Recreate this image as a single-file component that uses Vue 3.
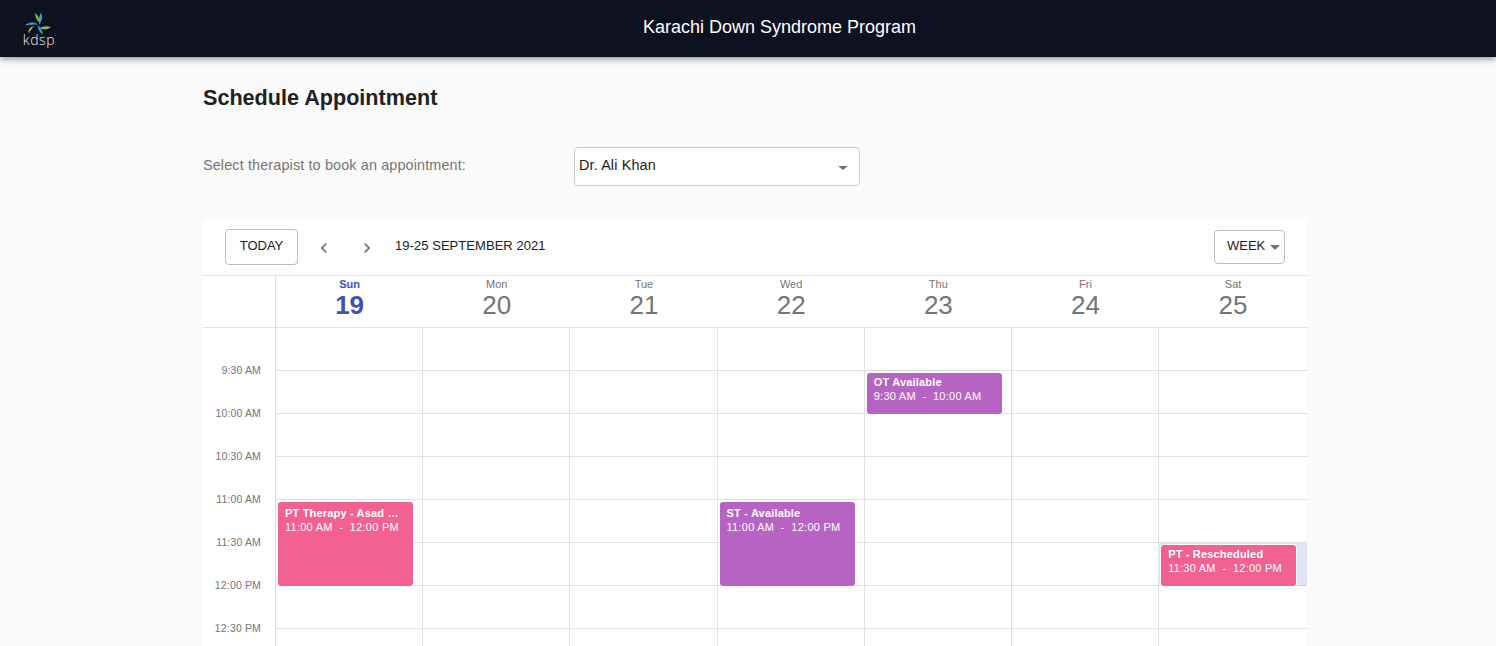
<script setup>
const times = ['9:30 AM', '10:00 AM', '10:30 AM', '11:00 AM', '11:30 AM', '12:00 PM', '12:30 PM']

const days = [
  { name: 'Sun', date: 19, today: true, events: [] },
  { name: 'Mon', date: 20, events: [] },
  { name: 'Tue', date: 21, events: [] },
  { name: 'Wed', date: 22, events: [] },
  { name: 'Thu', date: 23, events: [] },
  { name: 'Fri', date: 24, events: [] },
  { name: 'Sat', date: 25, events: [] },
]

// slot index counted from the first line of the grid (9:00 AM), each slot 43px
const slot = 43
days[0].events.push({ title: 'PT Therapy - Asad …', time: '11:00 AM  -  12:00 PM', from: 4, span: 2, color: '#f26192' })
days[3].events.push({ title: 'ST - Available', time: '11:00 AM  -  12:00 PM', from: 4, span: 2, color: '#b763c4' })
days[4].events.push({ title: 'OT Available', time: '9:30 AM  -  10:00 AM', from: 1, span: 1, color: '#b763c4' })
days[6].events.push({ title: 'PT - Rescheduled', time: '11:30 AM  -  12:00 PM', from: 5, span: 1, color: '#f26192', shaded: true })

const eventStyle = (ev) => ({
  top: ev.from * slot + 2 + 'px',
  height: ev.span * slot - 2 + 'px',
  background: ev.color,
})
</script>

<template>
  <div class="page">
    <header class="topbar">
      <div class="logo">
        <svg width="32" height="26" viewBox="22 10 32 26">
          <path d="M40 12.5C42 17 41 21 38 24.5C37.2 20 38 16.5 40 12.5Z" fill="#2aa5d6" />
          <path d="M34 13C37 15 38 18 38.3 22C35.6 20.4 34.4 17 34 13Z" fill="#86c440" />
          <path d="M24 25.2C28 21.6 33 21.6 37.5 24.5C33 24.6 28 24.8 24 25.2Z" fill="#2aa5d6" />
          <path d="M28 33.5C26.4 30 29 26.8 33.8 26C31 28 29.2 30.5 28 33.5Z" fill="#86c440" />
          <path d="M50 27C46 25.4 42 26.2 38.5 28C42 29.8 46.5 30 50 27Z" fill="#86c440" />
          <path d="M42 34C38.6 32.8 36.6 29 37 25C39.4 27.6 41.2 30.5 42 34Z" fill="#2aa5d6" />
        </svg>
        <span class="logo-text">kdsp</span>
      </div>
      <div class="app-title">Karachi Down Syndrome Program</div>
    </header>

    <main class="content">
      <h1 class="heading">Schedule Appointment</h1>

      <div class="therapist-row">
        <label class="therapist-label">Select therapist to book an appointment:</label>
        <div class="select">
          <span>Dr. Ali Khan</span>
          <i class="caret small"></i>
        </div>
      </div>

      <section class="calendar">
        <div class="toolbar">
          <button class="today-btn">TODAY</button>
          <button class="nav-btn">
            <svg width="20" height="20" viewBox="0 0 24 24"><path d="M15.4 7.4 14 6l-6 6 6 6 1.4-1.4L10.8 12z" fill="#757575" /></svg>
          </button>
          <button class="nav-btn">
            <svg width="20" height="20" viewBox="0 0 24 24"><path d="M10 6 8.6 7.4l4.6 4.6-4.6 4.6L10 18l6-6z" fill="#757575" /></svg>
          </button>
          <span class="range">19-25 SEPTEMBER 2021</span>
          <div class="view-select">
            <span>WEEK</span>
            <i class="caret"></i>
          </div>
        </div>

        <div class="day-head">
          <div class="time-corner"></div>
          <div v-for="d in days" :key="d.name" class="day-cell" :class="{ today: d.today }">
            <div class="day-name">{{ d.name }}</div>
            <div class="day-num">{{ d.date }}</div>
          </div>
        </div>

        <div class="week">
          <div class="time-col">
            <div class="time-first"></div>
            <div v-for="t in times" :key="t" class="time-label"><span>{{ t }}</span></div>
          </div>
          <div v-for="d in days" :key="d.name" class="day-col">
            <div v-for="n in 8" :key="n" class="slot"></div>
            <template v-for="ev in d.events" :key="ev.title">
              <div v-if="ev.shaded" class="shade" :style="{ top: ev.from * slot + 'px', height: ev.span * slot + 'px' }"></div>
              <div class="event" :class="{ compact: ev.span === 1 }" :style="eventStyle(ev)">
                <div class="event-title">{{ ev.title }}</div>
                <div class="event-time">{{ ev.time }}</div>
              </div>
            </template>
          </div>
        </div>
      </section>
    </main>
  </div>
</template>

<style>
html, body {
  margin: 0;
  background: #fafafa;
}
</style>

<style scoped>
.page {
  height: 646px;
  overflow: hidden;
  background: #fafafa;
  font-family: "Liberation Sans", Arial, sans-serif;
  color: #212121;
}

.topbar {
  position: relative;
  height: 57px;
  background: #0e111f;
  box-shadow: 0 2px 4px -1px rgba(0,0,0,.2), 0 4px 5px 0 rgba(0,0,0,.14), 0 1px 10px 0 rgba(0,0,0,.12);
  display: flex;
  align-items: center;
  justify-content: center;
  padding-left: 63px;
}

.logo {
  position: absolute;
  left: 23px;
  top: 10px;
  width: 32px;
  display: flex;
  flex-direction: column;
  align-items: center;
}

.logo-text {
  margin-top: -3px;
  font-family: "Open Sans", sans-serif;
  font-size: 14px;
  font-weight: 300;
  line-height: 13px;
  letter-spacing: 0.6px;
  color: #f0f0f0;
}

.app-title {
  color: #fff;
  font-size: 18px;
  margin-bottom: 3px;
}

.content {
  width: 1104px;
  margin-left: 203px;
}

.heading {
  margin: 0;
  padding-top: 27px;
  font-size: 21.6px;
  line-height: 28px;
  font-weight: 700;
  color: #212121;
}

.therapist-row {
  display: flex;
  align-items: center;
  margin-top: 35px;
}

.therapist-label {
  width: 371px;
  font-size: 14.4px;
  letter-spacing: 0.00938em;
  color: #757575;
  margin-bottom: 4px;
}

.select {
  width: 286px;
  height: 39px;
  box-sizing: border-box;
  background: #fff;
  border: 1px solid #ccc;
  border-radius: 4px;
  display: flex;
  align-items: center;
  justify-content: space-between;
  padding: 0 11px 4px 4px;
  font-size: 14.4px;
  letter-spacing: 0.00938em;
  color: #212121;
}

.caret {
  display: block;
  width: 0;
  height: 0;
  margin-top: 5px;
  border-left: 5px solid transparent;
  border-right: 5px solid transparent;
  border-top: 5px solid #757575;
}

.caret.small {
  border-top-width: 4px;
  margin-top: 6px;
}

.calendar {
  margin-top: 33px;
  background: #fff;
  border-radius: 4px 4px 0 0;
}

.toolbar {
  height: 56px;
  display: flex;
  align-items: center;
  padding: 0 22px;
  border-bottom: 1px solid #e0e0e0;
}

.today-btn {
  width: 73px;
  height: 36px;
  box-sizing: border-box;
  background: #fff;
  border: 1px solid #bdbdbd;
  border-radius: 4px;
  font-family: inherit;
  font-size: 13px;
  color: #212121;
  padding: 0 0 4px;
}

.nav-btn {
  width: 24px;
  height: 24px;
  padding: 2px 0 0;
  border: 0;
  background: none;
  margin-left: 14px;
  margin-right: 5px;
  display: flex;
  align-items: center;
  justify-content: center;
}

.range {
  margin-left: 11px;
  font-size: 13px;
  letter-spacing: 0.05px;
  color: #212121;
  padding-bottom: 3px;
}

.view-select {
  margin-left: auto;
  width: 71px;
  height: 34px;
  box-sizing: border-box;
  border: 1px solid #bdbdbd;
  border-radius: 4px;
  display: flex;
  align-items: center;
  padding: 0 4px 4px 12px;
  gap: 5px;
  font-size: 13px;
}

.day-head {
  display: grid;
  grid-template-columns: 73px repeat(6, 147.2px) 1fr;
  height: 51px;
  border-bottom: 1px solid #e0e0e0;
}

.time-corner {
  border-right: 1px solid #e0e0e0;
}

.day-cell {
  text-align: center;
  color: #757575;
  padding-top: 2px;
}

.day-name {
  font-size: 11px;
  line-height: 13px;
}

.day-num {
  font-size: 26px;
  line-height: 28px;
}

.today {
  color: #3f51b5;
}

.today .day-name,
.today .day-num {
  font-weight: 700;
}

.week {
  display: grid;
  grid-template-columns: 73px repeat(6, 147.2px) 1fr;
}

.time-col {
  border-right: 1px solid #e0e0e0;
}

.time-first {
  height: 43px;
}

.time-label {
  height: 43px;
  position: relative;
}

.time-label span {
  position: absolute;
  top: -7px;
  right: 14px;
  font-size: 10.5px;
  line-height: 12px;
  letter-spacing: 0.15px;
  color: #757575;
  white-space: nowrap;
}

.day-col {
  position: relative;
  border-right: 1px solid #e0e0e0;
}

.day-col:last-child {
  border-right: 0;
}

.slot {
  height: 43px;
  box-sizing: border-box;
  border-bottom: 1px solid #e0e0e0;
}

.event {
  position: absolute;
  left: 2px;
  width: 135px;
  box-sizing: border-box;
  padding: 4px 7px;
  border-radius: 3px;
  box-shadow: 0 0 0 1px #fff;
  color: #fff;
  font-size: 11px;
  line-height: 14px;
  overflow: hidden;
}

.event.compact {
  padding-top: 2px;
}

.event-title {
  font-weight: 700;
  letter-spacing: 0.18px;
  white-space: nowrap;
}

.event-time {
  letter-spacing: 0.25px;
  white-space: pre;
}

.shade {
  position: absolute;
  left: 0;
  right: 0;
  background: rgba(63, 81, 181, 0.15);
}
</style>
